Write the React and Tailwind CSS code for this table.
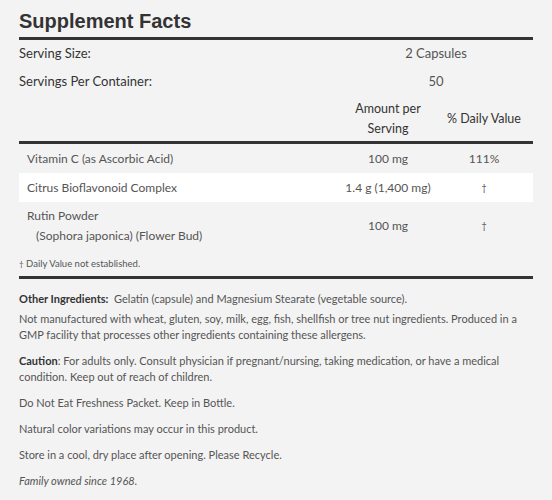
import React from 'react';

const rows = [
  { name: 'Vitamin C (as Ascorbic Acid)', amount: '100 mg', dv: '111%' },
  { name: 'Citrus Bioflavonoid Complex', amount: '1.4 g (1,400 mg)', dv: '†', white: true },
  { name: 'Rutin Powder', sub: '(Sophora japonica) (Flower Bud)', amount: '100 mg', dv: '†' },
];

const App = () => {
  return (
    <div className="min-h-[500px] bg-[#f3f3f3] px-[19px] pt-[8px] text-[#444]" style={{ fontFamily: 'Lato, "Noto Sans", sans-serif' }}>
      <div className="w-[514px]">
        <h1 className="text-[20px] font-bold leading-[26px] text-[#333] pb-[3px] border-b-[3px] border-[#333]" style={{ fontFamily: '"Liberation Sans", Arial, sans-serif' }}>
          Supplement Facts
        </h1>

        <div className="flex items-center h-[28px] text-[13px] text-[#333]">
          <div className="flex-1">Serving Size:</div>
          <div className="w-[194px] text-center text-[#555]">2 Capsules</div>
        </div>
        <div className="flex items-center h-[28px] text-[13px] text-[#333]">
          <div className="flex-1">Servings Per Container:</div>
          <div className="w-[194px] text-center text-[#555]">50</div>
        </div>

        <div className="flex items-center h-[48px] pr-[11px] text-[12.5px] leading-[20px] text-[#333] border-b-[3px] border-[#333]">
          <div className="flex-1"></div>
          <div className="w-[116px] text-center">Amount per<br />Serving</div>
          <div className="w-[76px] text-center">% Daily Value</div>
        </div>

        {rows.map((r) => (
          <div key={r.name} className={`flex pr-[11px] text-[12px] text-[#555] ${r.white ? 'bg-white' : ''} ${r.sub ? 'h-[49px] pt-[4px]' : 'h-[29px] items-center'}`}>
            <div className="flex-1 pl-[8px]">
              <div className={r.sub ? 'leading-[20px]' : ''}>{r.name}</div>
              {r.sub && <div className="pl-[9px] leading-[20px]">{r.sub}</div>}
            </div>
            <div className={`w-[116px] text-center ${r.sub ? 'leading-[20px] pt-[10px]' : ''}`}>{r.amount}</div>
            <div className={`w-[76px] text-center ${r.dv === '†' ? 'text-[9px]' : ''} ${r.sub ? 'leading-[20px] pt-[10px]' : ''}`}>{r.dv}</div>
          </div>
        ))}

        <div className="text-[9.5px] leading-[14px] text-[#555] pt-[6px] pb-[5px] border-b-[3px] border-[#333]">
          <span className="text-[8px]">†</span> Daily Value not established.
        </div>

        <div className="pt-[12px] text-[11px] leading-[16px] text-[#555]">
          <p className="mb-[4px]"><span className="font-bold text-[#333]">Other Ingredients:</span>&nbsp; Gelatin (capsule) and Magnesium Stearate (vegetable source).</p>
          <p className="mb-[10px]">Not manufactured with wheat, gluten, soy, milk, egg, fish, shellfish or tree nut ingredients. Produced in a GMP facility that processes other ingredients containing these allergens.</p>
          <p className="mb-[10px]"><span className="font-bold text-[#333]">Caution</span>: For adults only. Consult physician if pregnant/nursing, taking medication, or have a medical condition. Keep out of reach of children.</p>
          <p className="mb-[10px]">Do Not Eat Freshness Packet. Keep in Bottle.</p>
          <p className="mb-[10px]">Natural color variations may occur in this product.</p>
          <p className="mb-[10px]">Store in a cool, dry place after opening. Please Recycle.</p>
          <p className="italic">Family owned since 1968.</p>
        </div>
      </div>
    </div>
  );
};

export default App;
